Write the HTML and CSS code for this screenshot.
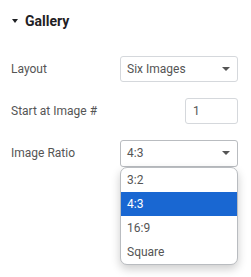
FILE: index.html
```html
<!DOCTYPE html>
<html lang="en">
  <head>
    <meta charset="UTF-8" />
    <title>Gallery</title>
    <link rel="stylesheet" href="styles.css">
  </head>
  <body>
    <div class="panel">
      <div class="section-title">
        <span class="caret"></span>
        <span>Gallery</span>
      </div>
      <div class="controls">
        <div class="control-row">
          <label class="control-label">Layout</label>
          <div class="select">
            <span>Six Images</span>
            <span class="select-arrow"></span>
          </div>
        </div>
        <div class="control-row">
          <label class="control-label">Start at Image #</label>
          <div class="number-input">1</div>
        </div>
        <div class="control-row">
          <label class="control-label">Image Ratio</label>
          <div class="select open">
            <span>4:3</span>
            <span class="select-arrow"></span>
            <ul class="dropdown">
              <li>3:2</li>
              <li class="active">4:3</li>
              <li>16:9</li>
              <li>Square</li>
            </ul>
          </div>
        </div>
      </div>
    </div>
  </body>
</html>
```

FILE: styles.css
```css
html,
body {
  height: 100%;
}
body {
  margin: 0;
  background: #fff;
  font-family: Roboto, "Liberation Sans", sans-serif;
  color: #555;
}
.panel {
  box-sizing: border-box;
  min-height: 100%;
  padding: 12px 13px 0 11px;
}
.section-title {
  display: flex;
  align-items: center;
  gap: 7px;
  height: 18px;
  font-size: 14px;
  font-weight: bold;
  color: #1f2124;
}
.caret {
  width: 0;
  height: 0;
  margin-left: 1px;
  border-left: 3.5px solid transparent;
  border-right: 3.5px solid transparent;
  border-top: 4px solid #1f2124;
}
.controls {
  display: flex;
  flex-direction: column;
  gap: 16px;
  margin-top: 26px;
}
.control-row {
  display: flex;
  justify-content: space-between;
  align-items: center;
  height: 26px;
}
.control-label {
  font-size: 12px;
  color: #555;
}
.select {
  position: relative;
  display: flex;
  align-items: center;
  justify-content: space-between;
  box-sizing: border-box;
  width: 118px;
  height: 26px;
  padding: 0 7px 0 6px;
  border: 1px solid #d5d8dc;
  border-radius: 3px;
  font-size: 12px;
  color: #555;
}
.select.open {
  height: 27px;
  border-color: #b9bcc0;
}
.select-arrow {
  width: 0;
  height: 0;
  border-left: 4px solid transparent;
  border-right: 4px solid transparent;
  border-top: 4px solid #555;
}
.number-input {
  display: flex;
  align-items: center;
  box-sizing: border-box;
  width: 53px;
  height: 26px;
  padding-left: 7px;
  border: 1px solid #d5d8dc;
  border-radius: 3px;
  font-size: 12px;
  color: #555;
}
.dropdown {
  position: absolute;
  z-index: 10;
  top: 26px;
  left: -1px;
  right: -1px;
  display: block;
  margin: 0;
  padding: 0;
  list-style: none;
  background: #fff;
  border: 1px solid #b9bcc0;
  border-radius: 7px;
  overflow: hidden;
  box-shadow: 0 4px 10px rgba(0, 0, 0, 0.2);
}
.dropdown li {
  display: block;
  height: 24px;
  line-height: 24px;
  padding-left: 6px;
  font-size: 12px;
  color: #555;
}
.dropdown li.active {
  background: #1967d2;
  color: #fff;
}
```
